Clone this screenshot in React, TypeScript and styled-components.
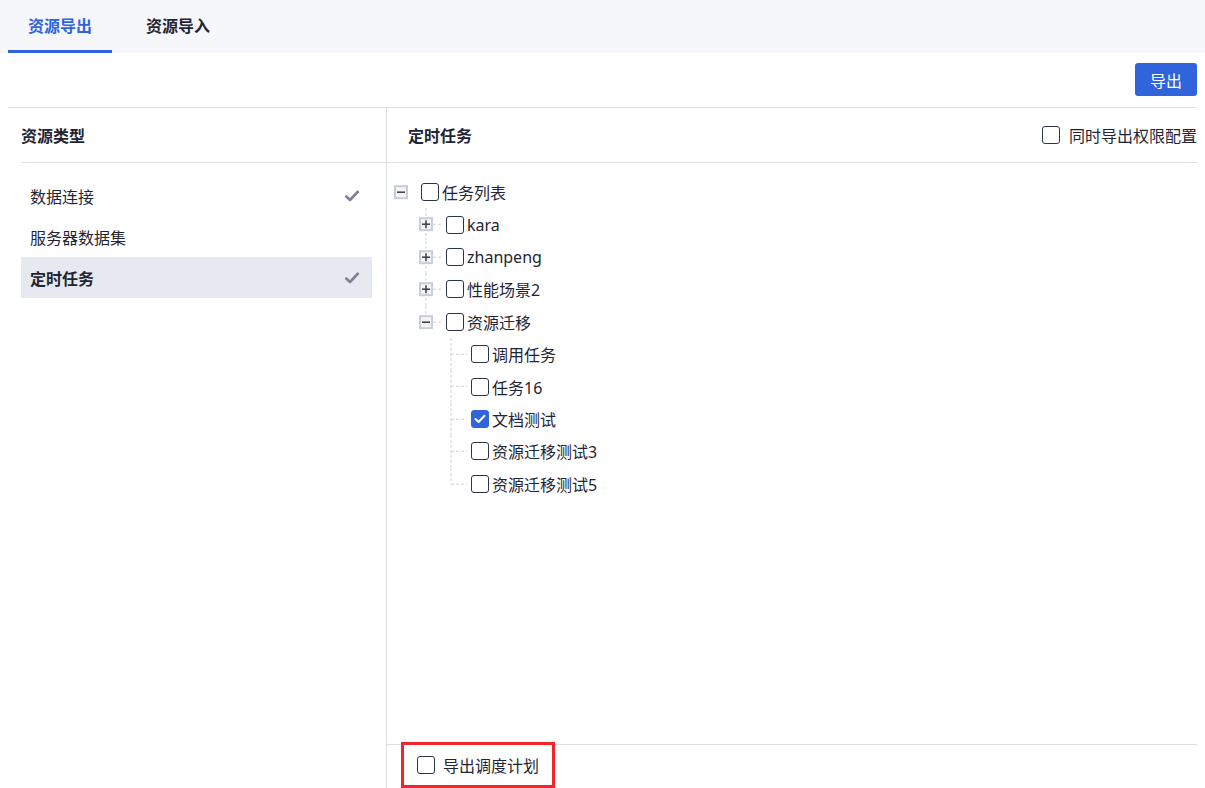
import React from "react";
import styled, { createGlobalStyle } from "styled-components";

const BLUE = "#2f64dd";
const LINE = "#dcdfe6";
const TEXT = "#1f2533";

const GlobalStyle = createGlobalStyle`
  html, body {
    margin: 0;
    padding: 0;
    background: #fff;
    overflow: hidden;
  }
  body {
    font-family: "Noto Sans", "Noto Sans CJK SC", sans-serif;
    font-size: 16px;
    color: ${TEXT};
  }
`;

const Page = styled.div`
  height: 100vh;
  display: flex;
  flex-direction: column;
`;

const TabBar = styled.div`
  height: 53px;
  flex: none;
  display: flex;
  gap: 14px;
  padding: 0 8px;
  background: #f6f7fb;
  box-sizing: border-box;
`;

const Tab = styled.div<{ $active?: boolean }>`
  display: flex;
  align-items: center;
  padding: 0 20px;
  font-weight: 600;
  color: ${(p) => (p.$active ? BLUE : TEXT)};
  border-bottom: 3px solid ${(p) => (p.$active ? BLUE : "transparent")};
  box-sizing: border-box;
`;

const Content = styled.div`
  flex: 1;
  min-height: 0;
  display: flex;
  flex-direction: column;
  padding: 0 8px;
`;

const Toolbar = styled.div`
  height: 55px;
  flex: none;
  display: flex;
  justify-content: flex-end;
  align-items: flex-start;
  padding-top: 10px;
  border-bottom: 1px solid ${LINE};
  box-sizing: border-box;
`;

const PrimaryButton = styled.button`
  width: 62px;
  height: 33px;
  border: none;
  border-radius: 3px;
  background: ${BLUE};
  color: #fff;
  font-family: inherit;
  font-size: 16px;
  cursor: pointer;
`;

const Main = styled.div`
  flex: 1;
  min-height: 0;
  display: grid;
  grid-template-columns: 379px 1fr;
`;

const LeftPanel = styled.div`
  border-right: 1px solid ${LINE};
  padding-left: 13px;
`;

const PanelHeader = styled.div<{ $pad?: number }>`
  height: 55px;
  display: flex;
  align-items: center;
  justify-content: space-between;
  padding-left: ${(p) => p.$pad ?? 0}px;
  font-weight: 600;
  border-bottom: 1px solid ${LINE};
  box-sizing: border-box;
`;

const TypeList = styled.div`
  padding: 12px 14px 0 0;
`;

const TypeRow = styled.div<{ $active?: boolean }>`
  height: 41px;
  display: flex;
  align-items: center;
  justify-content: space-between;
  padding: 0 12px 0 9px;
  background: ${(p) => (p.$active ? "#e6e9f0" : "transparent")};
  font-weight: ${(p) => (p.$active ? 600 : 400)};
`;

const RightPanel = styled.div`
  display: flex;
  flex-direction: column;
  min-height: 0;
`;

const CheckLabel = styled.label<{ $gap?: number }>`
  display: inline-flex;
  align-items: center;
  gap: ${(p) => p.$gap ?? 9}px;
  font-weight: 400;
`;

const Box = styled.span<{ $checked?: boolean }>`
  width: 18px;
  height: 18px;
  flex: none;
  display: inline-flex;
  align-items: center;
  justify-content: center;
  border: 1.5px solid ${(p) => (p.$checked ? BLUE : "#2c3545")};
  border-radius: 3px;
  background: ${(p) => (p.$checked ? BLUE : "#fff")};
  box-sizing: border-box;
`;

const Tree = styled.div`
  flex: 1;
  padding: 13px 0 0 5px;
`;

const TreeRow = styled.div`
  height: 32.4px;
  display: flex;
  align-items: center;
`;

const Cell = styled.svg`
  width: 25px;
  height: 32.4px;
  flex: none;
  display: block;
`;

const NodeLabel = styled.span`
  margin-left: 3px;
  white-space: nowrap;
`;

const NodeBox = styled(Box)`
  margin-left: 4px;
`;

const Footer = styled.div`
  height: 44px;
  flex: none;
  padding-left: 14px;
  border-top: 1px solid ${LINE};
  box-sizing: border-box;
`;

const Highlight = styled.div`
  margin-top: -3px;
  height: 46px;
  display: inline-flex;
  align-items: center;
  padding: 0 13px;
  border: 3px solid #f2252d;
  box-sizing: border-box;
`;

type Node = {
  label: string;
  checked?: boolean;
  expanded?: boolean;
  children?: Node[];
};

const tree: Node = {
  label: "任务列表",
  expanded: true,
  children: [
    { label: "kara", children: [] },
    { label: "zhanpeng", children: [] },
    { label: "性能场景2", children: [] },
    {
      label: "资源迁移",
      expanded: true,
      children: [
        { label: "调用任务" },
        { label: "任务16" },
        { label: "文档测试", checked: true },
        { label: "资源迁移测试3" },
        { label: "资源迁移测试5" },
      ],
    },
  ],
};

type FlatRow = {
  node: Node;
  level: number;
  isLast: boolean;
  ancestorsLast: boolean[];
};

function flatten(node: Node, level: number, isLast: boolean, ancestorsLast: boolean[], out: FlatRow[]) {
  out.push({ node, level, isLast, ancestorsLast });
  if (node.children && node.expanded) {
    node.children.forEach((c, i) =>
      flatten(c, level + 1, i === node.children!.length - 1, [...ancestorsLast, isLast], out)
    );
  }
  return out;
}

const H = 32.4;
const MID = H / 2;
const X = 9;
const dash = { stroke: "#cfd2d9", strokeWidth: 1, strokeDasharray: "3 2", fill: "none" };

function IndentCell({ line }: { line: boolean }) {
  return (
    <Cell viewBox={`0 0 25 ${H}`}>
      {line && <line x1={X} y1={0} x2={X} y2={H} {...dash} />}
    </Cell>
  );
}

function SwitcherCell({ row }: { row: FlatRow }) {
  const hasChildren = !!row.node.children;
  const nested = row.level > 0;
  return (
    <Cell viewBox={`0 0 25 ${H}`}>
      {nested && <line x1={X} y1={0} x2={X} y2={row.isLast ? MID : H} {...dash} />}
      {nested && <line x1={hasChildren ? X + 7 : X} y1={MID} x2={25} y2={MID} {...dash} />}
      {hasChildren && (
        <g>
          <rect x={X - 6} y={MID - 6} width={12} height={12} fill="#f4f5f8" stroke="#c9cdd6" strokeWidth={2} />
          <line x1={X - 4} y1={MID} x2={X + 4} y2={MID} stroke="#353b47" strokeWidth={1.5} />
          {!row.node.expanded && (
            <line x1={X} y1={MID - 4} x2={X} y2={MID + 4} stroke="#353b47" strokeWidth={1.5} />
          )}
        </g>
      )}
    </Cell>
  );
}

function Tick() {
  return (
    <svg width="12" height="10" viewBox="0 0 12 10">
      <polyline points="1.5,5 4.6,8 10.5,1.8" fill="none" stroke="#fff" strokeWidth="2" strokeLinecap="round" strokeLinejoin="round" />
    </svg>
  );
}

function Checkbox({ checked }: { checked?: boolean }) {
  return <Box $checked={checked}>{checked && <Tick />}</Box>;
}

function GrayCheck() {
  return (
    <svg width="16" height="13" viewBox="0 0 16 13">
      <polyline points="1.5,6.8 6,11 14.5,2" fill="none" stroke="#7c8393" strokeWidth="2.6" strokeLinejoin="round" />
    </svg>
  );
}

const types = [
  { label: "数据连接", done: true },
  { label: "服务器数据集", done: false },
  { label: "定时任务", done: true, active: true },
];

export default function App() {
  const rows = flatten(tree, 0, true, [], []);
  return (
    <Page>
      <GlobalStyle />
      <TabBar>
        <Tab $active>资源导出</Tab>
        <Tab>资源导入</Tab>
      </TabBar>
      <Content>
        <Toolbar>
          <PrimaryButton>导出</PrimaryButton>
        </Toolbar>
        <Main>
          <LeftPanel>
            <PanelHeader>资源类型</PanelHeader>
            <TypeList>
              {types.map((t) => (
                <TypeRow key={t.label} $active={t.active}>
                  <span>{t.label}</span>
                  {t.done && <GrayCheck />}
                </TypeRow>
              ))}
            </TypeList>
          </LeftPanel>
          <RightPanel>
            <PanelHeader $pad={21}>
              <span>定时任务</span>
              <CheckLabel>
                <Checkbox />
                同时导出权限配置
              </CheckLabel>
            </PanelHeader>
            <Tree>
              {rows.map((r, i) => (
                <TreeRow key={i}>
                  {r.ancestorsLast.map((last, k) => (
                    <IndentCell key={k} line={k > 0 && !last} />
                  ))}
                  <SwitcherCell row={r} />
                  <NodeBox $checked={r.node.checked}>{r.node.checked && <Tick />}</NodeBox>
                  <NodeLabel>{r.node.label}</NodeLabel>
                </TreeRow>
              ))}
            </Tree>
            <Footer>
              <Highlight>
                <CheckLabel $gap={8}>
                  <Checkbox />
                  导出调度计划
                </CheckLabel>
              </Highlight>
            </Footer>
          </RightPanel>
        </Main>
      </Content>
    </Page>
  );
}
